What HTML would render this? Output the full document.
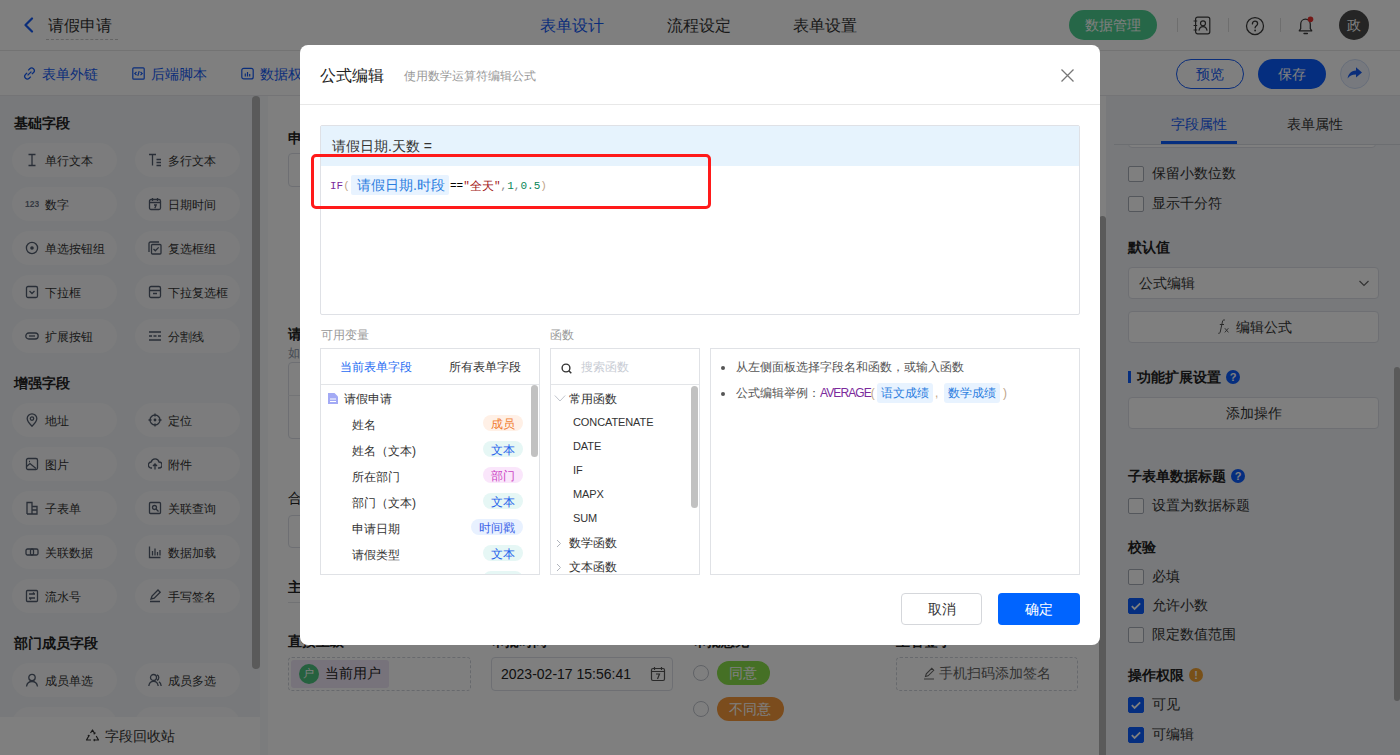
<!DOCTYPE html>
<html><head><meta charset="utf-8">
<style>
*{box-sizing:border-box;margin:0;padding:0}
html,body{width:1400px;height:755px;overflow:hidden;background:#fff}
body{position:relative;font-family:"Liberation Sans",sans-serif;color:#333;font-size:14px}
.a{position:absolute}
.t{position:absolute;white-space:nowrap;line-height:1}
/* top bar */
#top{left:0;top:0;width:1400px;height:51px;background:#fff;border-bottom:1px solid #e6e6e6}
#tool{left:0;top:51px;width:1400px;height:45px;background:#fff}
#left{left:0;top:96px;width:260px;height:659px;background:#f0f2f6}
#strip{left:260px;top:96px;width:8px;height:659px;background:#f7f8fa}
#canvas{left:268px;top:96px;width:838px;height:659px;background:#fff}
#right{left:1106px;top:96px;width:294px;height:659px;background:#f0f2f6}
.chip{position:absolute;width:105px;height:34px;border-radius:17px;background:#f8f9fa}
.chip .ic{position:absolute;left:16px;top:10px;width:14px;height:14px}
.chip .t{left:33px;top:11px;font-size:12px;color:#333}
.sec{font-size:14px;font-weight:bold;color:#222}
#mask{left:0;top:0;width:1400px;height:755px;background:rgba(0,0,0,.5)}
#modal{left:300px;top:45px;width:800px;height:600px;background:#fff;border-radius:8px}
.cb{position:absolute;width:16px;height:16px;border:1px solid #a9aeb8;border-radius:2px;background:#fff}
.cb.on{background:#0a5cff;border-color:#0a5cff}
</style></head><body>

<div id="top" class="a"></div>
<div id="tool" class="a"></div>
<div id="left" class="a"></div>
<div class="a" style="left:0;top:95px;width:1400px;height:1px;background:#e8e9ec"></div>
<div id="strip" class="a"></div>
<div id="canvas" class="a"></div>
<div id="right" class="a"></div>
<div class="a" id="topc">
  <svg class="a" style="left:22px;top:17px" width="13" height="16" viewBox="0 0 13 16"><path d="M10 1.5 L3.5 8 L10 14.5" fill="none" stroke="#155bf5" stroke-width="2.2" stroke-linecap="round" stroke-linejoin="round"/></svg>
  <div class="t" style="left:48px;top:18px;font-size:16px;color:#333">请假申请</div>
  <div class="a" style="left:46px;top:39px;width:72px;border-top:1px dashed #c8c8c8"></div>
  <div class="t" style="left:540px;top:18px;font-size:16px;color:#155bf5">表单设计</div>
  <div class="t" style="left:667px;top:18px;font-size:16px;color:#333">流程设定</div>
  <div class="t" style="left:793px;top:18px;font-size:16px;color:#333">表单设置</div>
  <div class="a" style="left:1069px;top:10px;width:88px;height:30px;border-radius:15px;background:#4ccf90"></div>
  <div class="t" style="left:1085px;top:18px;font-size:14px;color:#fff">数据管理</div>
  <div class="a" style="left:1177px;top:18px;width:1px;height:14px;background:#ddd"></div>
  <div class="a" style="left:1228px;top:18px;width:1px;height:14px;background:#ddd"></div>
  <div class="a" style="left:1280px;top:18px;width:1px;height:14px;background:#ddd"></div>
  <svg class="a" style="left:1192px;top:16px" width="20" height="19" viewBox="0 0 20 19"><rect x="3.6" y="1.2" width="14.2" height="16.6" rx="2" fill="none" stroke="#3a3a3a" stroke-width="1.2"/><path d="M1.6 5h3.6M1.6 9.5h3.6M1.6 14h3.6" stroke="#3a3a3a" stroke-width="1.2"/><circle cx="11" cy="7.3" r="2.5" fill="none" stroke="#3a3a3a" stroke-width="1.2"/><path d="M6.9 14.6c0.6-2.7 2.2-3.9 4.1-3.9s3.5 1.2 4.1 3.9" fill="none" stroke="#3a3a3a" stroke-width="1.2"/></svg>
  <svg class="a" style="left:1245px;top:16px" width="20" height="20" viewBox="0 0 20 20"><circle cx="10" cy="10" r="8.5" fill="none" stroke="#3a3a3a" stroke-width="1.25"/><path d="M7.4 7.9c0-1.6 1.1-2.7 2.6-2.7s2.6 1 2.6 2.5c0 1.9-2.5 2-2.5 4.1" fill="none" stroke="#3a3a3a" stroke-width="1.3" stroke-linecap="round"/><circle cx="10.1" cy="14.5" r="0.9" fill="#3a3a3a"/></svg>
  <svg class="a" style="left:1296px;top:15px" width="20" height="21" viewBox="0 0 20 21"><path d="M3.2 15.8h12.6l-1.5-2.1V9.3c0-3-2-5.1-4.8-5.1S4.7 6.3 4.7 9.3v4.4z" fill="none" stroke="#3a3a3a" stroke-width="1.25" stroke-linejoin="round"/><path d="M8 18.5h3.4" stroke="#3a3a3a" stroke-width="1.3" stroke-linecap="round"/><circle cx="14.5" cy="4.2" r="2.8" fill="#e8322f"/></svg>
  <div class="a" style="left:1339px;top:10px;width:30px;height:30px;border-radius:15px;background:#4a4a4a"></div>
  <div class="t" style="left:1347px;top:18px;font-size:14px;color:#fff">政</div>

  <svg class="a" style="left:23px;top:67px" width="13" height="13" viewBox="0 0 13 13"><g fill="none" stroke="#155bf5" stroke-width="1.3"><path d="M5.2 3.4l1.6-1.6a2.6 2.6 0 0 1 3.7 3.7L8.9 7.1"/><path d="M7.8 9.6l-1.6 1.6a2.6 2.6 0 0 1-3.7-3.7l1.6-1.6"/><path d="M4.6 8.4l3.8-3.8"/></g></svg>
  <div class="t" style="left:42px;top:67px;font-size:14px;color:#155bf5">表单外链</div>
  <svg class="a" style="left:132px;top:67px" width="13" height="13" viewBox="0 0 13 13"><g fill="none" stroke="#155bf5" stroke-width="1.2"><rect x="0.8" y="0.8" width="11.4" height="11.4" rx="1"/><path d="M4.5 4.8L2.8 6.5l1.7 1.7M8.5 4.8l1.7 1.7-1.7 1.7M7.2 4.2L5.8 8.8"/></g></svg>
  <div class="t" style="left:151px;top:67px;font-size:14px;color:#155bf5">后端脚本</div>
  <svg class="a" style="left:241px;top:67px" width="13" height="13" viewBox="0 0 13 13"><g fill="none" stroke="#155bf5" stroke-width="1.2"><rect x="0.8" y="1.3" width="11.4" height="10.6" rx="2"/><path d="M4.3 6.5v3M6.5 5v4.5M8.7 7v2.5"/></g></svg>
  <div class="t" style="left:260px;top:67px;font-size:14px;color:#155bf5">数据权限</div>
  <div class="a" style="left:1176px;top:59px;width:68px;height:30px;border-radius:15px;border:1px solid #155bf5;background:#fff"></div>
  <div class="t" style="left:1196px;top:67px;font-size:14px;color:#155bf5">预览</div>
  <div class="a" style="left:1258px;top:59px;width:68px;height:30px;border-radius:15px;background:#0a5cff"></div>
  <div class="t" style="left:1278px;top:67px;font-size:14px;color:#fff">保存</div>
  <div class="a" style="left:1340px;top:59px;width:30px;height:30px;border-radius:15px;border:1px solid #cfdcf5;background:#eef3fc"></div>
  <svg class="a" style="left:1346px;top:64px" width="18" height="18" viewBox="0 0 18 18"><path d="M10 3.2l6 5.2-6 5.2v-3.1c-4 0-6.6 1.1-8.4 4 0.6-4.6 3.2-7.5 8.4-8.1z" fill="#155bf5"/></svg>
</div>
<div class="a" id="leftc">
<div class="t sec" style="left:14px;top:116px">基础字段</div>
<div class="chip" style="left:12px;top:143px"></div><svg class="a" style="left:25px;top:153px" width="14" height="14" viewBox="0 0 14 14"><path d="M3.5 1.5h7M3.5 12.5h7M7 1.5v11" stroke="#525c6e" stroke-width="1.3" fill="none"/></svg><div class="t" style="left:45px;top:155px;font-size:12px;color:#333">单行文本</div>
<div class="chip" style="left:135px;top:143px"></div><svg class="a" style="left:148px;top:153px" width="14" height="14" viewBox="0 0 14 14"><path d="M1 1.5h7M4.5 1.5v11M8.5 6.5h4.5M8.5 9.5h4.5M8.5 12.5h4.5" stroke="#525c6e" stroke-width="1.3" fill="none"/></svg><div class="t" style="left:168px;top:155px;font-size:12px;color:#333">多行文本</div>
<div class="chip" style="left:12px;top:187px"></div><svg class="a" style="left:25px;top:197px" width="14" height="14" viewBox="0 0 14 14"><text x="0" y="9.5" font-size="8.5" font-weight="bold" fill="#6b7385" font-family="Liberation Sans">123</text></svg><div class="t" style="left:45px;top:199px;font-size:12px;color:#333">数字</div>
<div class="chip" style="left:135px;top:187px"></div><svg class="a" style="left:148px;top:197px" width="14" height="14" viewBox="0 0 14 14"><rect x="1.5" y="2.5" width="11" height="10" rx="1.5" stroke="#525c6e" stroke-width="1.3" fill="none"/><path d="M1.5 5.5h11M4.5 1v3M9.5 1v3M6 8h2.2l-1.4 3.2" stroke="#525c6e" stroke-width="1.3" fill="none"/></svg><div class="t" style="left:168px;top:199px;font-size:12px;color:#333">日期时间</div>
<div class="chip" style="left:12px;top:231px"></div><svg class="a" style="left:25px;top:241px" width="14" height="14" viewBox="0 0 14 14"><circle cx="7" cy="7" r="5.6" stroke="#525c6e" stroke-width="1.3" fill="none"/><circle cx="7" cy="7" r="1.8" fill="#4e5969"/></svg><div class="t" style="left:45px;top:243px;font-size:12px;color:#333">单选按钮组</div>
<div class="chip" style="left:135px;top:231px"></div><svg class="a" style="left:148px;top:241px" width="14" height="14" viewBox="0 0 14 14"><path d="M1 11V2.5A1.5 1.5 0 0 1 2.5 1H11" stroke="#525c6e" stroke-width="1.3" fill="none"/><rect x="3.5" y="3.5" width="9.5" height="9.5" rx="1" stroke="#525c6e" stroke-width="1.3" fill="none"/><path d="M5.5 8l1.8 1.8 3.4-3.4" stroke="#525c6e" stroke-width="1.3" fill="none"/></svg><div class="t" style="left:168px;top:243px;font-size:12px;color:#333">复选框组</div>
<div class="chip" style="left:12px;top:275px"></div><svg class="a" style="left:25px;top:285px" width="14" height="14" viewBox="0 0 14 14"><rect x="1.5" y="1.5" width="11" height="11" rx="1.5" stroke="#525c6e" stroke-width="1.3" fill="none"/><path d="M4.5 6l2.5 2.5 2.5-2.5" stroke="#525c6e" stroke-width="1.3" fill="none"/></svg><div class="t" style="left:45px;top:287px;font-size:12px;color:#333">下拉框</div>
<div class="chip" style="left:135px;top:275px"></div><svg class="a" style="left:148px;top:285px" width="14" height="14" viewBox="0 0 14 14"><rect x="1.5" y="1.5" width="11" height="11" rx="1.5" stroke="#525c6e" stroke-width="1.3" fill="none"/><path d="M1.5 5.5h11M5 8.5h4" stroke="#525c6e" stroke-width="1.3" fill="none"/></svg><div class="t" style="left:168px;top:287px;font-size:12px;color:#333">下拉复选框</div>
<div class="chip" style="left:12px;top:319px"></div><svg class="a" style="left:25px;top:329px" width="14" height="14" viewBox="0 0 14 14"><rect x="0.8" y="4" width="12.4" height="6" rx="3" stroke="#525c6e" stroke-width="1.3" fill="none"/><path d="M4 7h6" stroke="#525c6e" stroke-width="1.3" fill="none"/></svg><div class="t" style="left:45px;top:331px;font-size:12px;color:#333">扩展按钮</div>
<div class="chip" style="left:135px;top:319px"></div><svg class="a" style="left:148px;top:329px" width="14" height="14" viewBox="0 0 14 14"><path d="M1 3h12M1 11h12M1 7h3M5.5 7h3M10 7h3" stroke="#525c6e" stroke-width="1.3" fill="none"/></svg><div class="t" style="left:168px;top:331px;font-size:12px;color:#333">分割线</div>
<div class="t sec" style="left:14px;top:376px">增强字段</div>
<div class="chip" style="left:12px;top:403px"></div><svg class="a" style="left:25px;top:413px" width="14" height="14" viewBox="0 0 14 14"><path d="M7 13.2s-4.8-4.4-4.8-7.6a4.8 4.8 0 0 1 9.6 0c0 3.2-4.8 7.6-4.8 7.6z" stroke="#525c6e" stroke-width="1.3" fill="none"/><circle cx="7" cy="5.6" r="1.7" stroke="#525c6e" stroke-width="1.3" fill="none"/></svg><div class="t" style="left:45px;top:415px;font-size:12px;color:#333">地址</div>
<div class="chip" style="left:135px;top:403px"></div><svg class="a" style="left:148px;top:413px" width="14" height="14" viewBox="0 0 14 14"><circle cx="7" cy="7" r="5" stroke="#525c6e" stroke-width="1.3" fill="none"/><circle cx="7" cy="7" r="1.4" fill="#4e5969"/><path d="M7 0.5v3M7 10.5v3M0.5 7h3M10.5 7h3" stroke="#525c6e" stroke-width="1.3" fill="none"/></svg><div class="t" style="left:168px;top:415px;font-size:12px;color:#333">定位</div>
<div class="chip" style="left:12px;top:447px"></div><svg class="a" style="left:25px;top:457px" width="14" height="14" viewBox="0 0 14 14"><rect x="1.5" y="1.5" width="11" height="11" rx="1.5" stroke="#525c6e" stroke-width="1.3" fill="none"/><path d="M1.5 9.5l3.5-3 6 5M4 4.5h1" stroke="#525c6e" stroke-width="1.3" fill="none"/></svg><div class="t" style="left:45px;top:459px;font-size:12px;color:#333">图片</div>
<div class="chip" style="left:135px;top:447px"></div><svg class="a" style="left:148px;top:457px" width="14" height="14" viewBox="0 0 14 14"><path d="M4 11H3.5a3 3 0 0 1-0.3-6A4 4 0 0 1 11 5a3 3 0 0 1 0 6h-1M7 12.5V7M5 9l2-2 2 2" stroke="#525c6e" stroke-width="1.3" fill="none"/></svg><div class="t" style="left:168px;top:459px;font-size:12px;color:#333">附件</div>
<div class="chip" style="left:12px;top:491px"></div><svg class="a" style="left:25px;top:501px" width="14" height="14" viewBox="0 0 14 14"><path d="M2 13V1.5h5v11.5M7 5.5h5V13H2M7 9h5" stroke="#525c6e" stroke-width="1.3" fill="none"/></svg><div class="t" style="left:45px;top:503px;font-size:12px;color:#333">子表单</div>
<div class="chip" style="left:135px;top:491px"></div><svg class="a" style="left:148px;top:501px" width="14" height="14" viewBox="0 0 14 14"><rect x="1.5" y="1.5" width="11" height="11" rx="1" stroke="#525c6e" stroke-width="1.3" fill="none"/><circle cx="6.5" cy="6.5" r="2" stroke="#525c6e" stroke-width="1.3" fill="none"/><path d="M8 8l2.5 2.5" stroke="#525c6e" stroke-width="1.3" fill="none"/></svg><div class="t" style="left:168px;top:503px;font-size:12px;color:#333">关联查询</div>
<div class="chip" style="left:12px;top:535px"></div><svg class="a" style="left:25px;top:545px" width="14" height="14" viewBox="0 0 14 14"><rect x="1" y="4" width="7.5" height="6" rx="1.5" stroke="#525c6e" stroke-width="1.3" fill="none"/><rect x="5.5" y="4" width="7.5" height="6" rx="1.5" stroke="#525c6e" stroke-width="1.3" fill="none"/></svg><div class="t" style="left:45px;top:547px;font-size:12px;color:#333">关联数据</div>
<div class="chip" style="left:135px;top:535px"></div><svg class="a" style="left:148px;top:545px" width="14" height="14" viewBox="0 0 14 14"><path d="M1.5 1.5v11h11M4.5 6v4.5M7 3.5v7M9.5 7v3.5M12 5v5.5" stroke="#525c6e" stroke-width="1.3" fill="none"/></svg><div class="t" style="left:168px;top:547px;font-size:12px;color:#333">数据加载</div>
<div class="chip" style="left:12px;top:579px"></div><svg class="a" style="left:25px;top:589px" width="14" height="14" viewBox="0 0 14 14"><rect x="1.5" y="1.5" width="11" height="11" rx="1" stroke="#525c6e" stroke-width="1.3" fill="none"/><path d="M4 5h6M4 9h6M8 3.5l1.5 1.5M6 10.5L4.5 9" stroke="#525c6e" stroke-width="1.3" fill="none"/></svg><div class="t" style="left:45px;top:591px;font-size:12px;color:#333">流水号</div>
<div class="chip" style="left:135px;top:579px"></div><svg class="a" style="left:148px;top:589px" width="14" height="14" viewBox="0 0 14 14"><path d="M2 12.5h10M3 10l1-3L10 1l2.2 2.2-6 6z" stroke="#525c6e" stroke-width="1.3" fill="none"/></svg><div class="t" style="left:168px;top:591px;font-size:12px;color:#333">手写签名</div>
<div class="t sec" style="left:14px;top:636px">部门成员字段</div>
<div class="chip" style="left:12px;top:663px"></div><svg class="a" style="left:25px;top:673px" width="14" height="14" viewBox="0 0 14 14"><circle cx="7" cy="4.5" r="3.2" stroke="#525c6e" stroke-width="1.3" fill="none"/><path d="M1.5 13.5c0.5-3.2 2.7-5 5.5-5s5 1.8 5.5 5" stroke="#525c6e" stroke-width="1.3" fill="none"/></svg><div class="t" style="left:45px;top:675px;font-size:12px;color:#333">成员单选</div>
<div class="chip" style="left:135px;top:663px"></div><svg class="a" style="left:148px;top:673px" width="14" height="14" viewBox="0 0 14 14"><circle cx="5.5" cy="4.5" r="3" stroke="#525c6e" stroke-width="1.3" fill="none"/><path d="M0.8 13c0.4-3 2.4-4.6 4.7-4.6s4.3 1.6 4.7 4.6M9 1.8a3 3 0 0 1 0 5.5M11 8.8c1.3 0.8 2 2.3 2.2 4.2" stroke="#525c6e" stroke-width="1.3" fill="none"/></svg><div class="t" style="left:168px;top:675px;font-size:12px;color:#333">成员多选</div>
<div class="chip" style="left:12px;top:707px"></div><div class="chip" style="left:135px;top:707px"></div>
<div class="a" style="left:252px;top:96px;width:8px;height:573px;border-radius:4px;background:#b4b4b4"></div>
<div class="a" style="left:0;top:717px;width:260px;height:38px;background:#fff"></div>
<svg class="a" style="left:85px;top:729px" width="15" height="14" viewBox="0 0 15 14"><g fill="none" stroke="#333" stroke-width="1.2" stroke-linejoin="round"><path d="M5.5 4L7.5 1l2.2 3.6M11.2 7l2.3 4H9.5M6 11H1.5l2.3-4"/><path d="M8.6 4.8l1.2-0.2 0.3-1.2M4.5 7.2L3.8 6.3l-1 0.4M8.8 12.2l0.8-1.2-0.8-1"/></g></svg>
<div class="t" style="left:105px;top:729px;font-size:14px;color:#333">字段回收站</div>
</div>
<div class="a" id="midc">
<div class="t" style="left:288px;top:131px;font-size:14px;color:#222;font-weight:bold">申请人信息</div>
<div class="a" style="left:288px;top:153px;width:182px;height:34px;border:1px solid #dcdfe6;border-radius:4px"></div>
<div class="t" style="left:288px;top:327px;font-size:14px;color:#222;font-weight:bold">请假事由</div>
<div class="t" style="left:288px;top:347px;font-size:12px;color:#8a94a6">如有特殊情况请说明</div>
<div class="a" style="left:288px;top:362px;width:400px;height:77px;border:1px solid #dcdfe6;border-radius:4px"></div>
<div class="a" style="left:288px;top:395px;width:400px;border-top:1px solid #e6e8ec"></div>
<div class="t" style="left:288px;top:491px;font-size:14px;color:#222">合计天数</div>
<div class="a" style="left:288px;top:515px;width:182px;height:33px;border:1px solid #dcdfe6;border-radius:4px"></div>
<div class="t" style="left:288px;top:580px;font-size:14px;color:#222;font-weight:bold">主管审批</div>
<div class="a" style="left:288px;top:602px;width:792px;border-top:1px solid #e3e5e8"></div>
<div class="t" style="left:288px;top:634px;font-size:14px;color:#222;font-weight:bold">直接上级</div>
<div class="t" style="left:491px;top:634px;font-size:14px;color:#222;font-weight:bold">审批时间</div>
<div class="t" style="left:693px;top:634px;font-size:14px;color:#222;font-weight:bold">审批意见</div>
<div class="t" style="left:896px;top:634px;font-size:14px;color:#222;font-weight:bold">主管签字</div>
<div class="a" style="left:288px;top:657px;width:183px;height:34px;border:1px dashed #cfd3da;border-radius:4px"></div>
<div class="a" style="left:291px;top:660px;width:98px;height:28px;border-radius:3px;background:#eee6f7"></div>
<div class="a" style="left:299px;top:664px;width:20px;height:20px;border-radius:10px;background:#4cc27e"></div>
<div class="t" style="left:303px;top:668px;font-size:11px;color:#fff">户</div>
<div class="t" style="left:325px;top:666px;font-size:14px;color:#222">当前用户</div>
<div class="a" style="left:491px;top:657px;width:182px;height:34px;border:1px solid #dcdfe6;border-radius:4px"></div>
<div class="t" style="left:501px;top:667px;font-size:14px;color:#222">2023-02-17 15:56:41</div>
<svg class="a" style="left:650px;top:666px" width="16" height="16" viewBox="0 0 16 16"><g fill="none" stroke="#555" stroke-width="1.2"><rect x="1.5" y="2.5" width="13" height="12" rx="1.5"/><path d="M1.5 5.5h13M4.5 1v3M11.5 1v3M6 8h3.5l-2 5"/></g></svg>
<div class="a" style="left:693px;top:665px;width:16px;height:16px;border-radius:8px;border:1px solid #c0c4cc;background:#fff"></div>
<div class="a" style="left:717px;top:661px;width:53px;height:24px;border-radius:12px;background:#8ae04a"></div>
<div class="t" style="left:729px;top:666px;font-size:14px;color:#fff">同意</div>
<div class="a" style="left:693px;top:701px;width:16px;height:16px;border-radius:8px;border:1px solid #c0c4cc;background:#fff"></div>
<div class="a" style="left:717px;top:697px;width:67px;height:24px;border-radius:12px;background:#f7993a"></div>
<div class="t" style="left:729px;top:702px;font-size:14px;color:#fff">不同意</div>
<div class="a" style="left:896px;top:657px;width:182px;height:34px;border:1px dashed #cfd3da;border-radius:4px"></div>
<svg class="a" style="left:923px;top:667px" width="13" height="13" viewBox="0 0 13 13"><g fill="none" stroke="#666" stroke-width="1.1"><path d="M1 12h10M2.5 9.5l0.8-2.6L8.8 1.4l1.9 1.9-5.6 5.5z"/></g></svg>
<div class="t" style="left:939px;top:666px;font-size:14px;color:#666">手机扫码添加签名</div>
<div class="a" style="left:1099px;top:216px;width:7px;height:560px;border-radius:3.5px;background:#b4b4b4"></div>
<div class="a" style="left:1128px;top:110px;width:248px;height:38px;border:1px solid #dcdfe6;border-radius:4px;background:#fff"></div>
<div class="a" style="left:1106px;top:96px;width:294px;height:49px;background:#f0f2f6"></div>
<div class="a" style="left:1114px;top:144px;width:286px;border-top:1px solid #d9dce2"></div>
<div class="t" style="left:1171px;top:117px;font-size:14px;color:#155bf5">字段属性</div>
<div class="t" style="left:1287px;top:117px;font-size:14px;color:#333">表单属性</div>
<div class="a" style="left:1161px;top:141px;width:76px;height:3px;background:#0a5cff"></div>
<div class="cb" style="left:1128px;top:166px"></div><div class="t" style="left:1152px;top:166px;font-size:14px;color:#333">保留小数位数</div>
<div class="cb" style="left:1128px;top:196px"></div><div class="t" style="left:1152px;top:196px;font-size:14px;color:#333">显示千分符</div>
<div class="t sec" style="left:1128px;top:240px">默认值</div>
<div class="a" style="left:1128px;top:267px;width:251px;height:32px;border:1px solid #dcdfe6;border-radius:4px;background:#fff"></div>
<div class="t" style="left:1139px;top:276px;font-size:14px;color:#333">公式编辑</div>
<svg class="a" style="left:1358px;top:278px" width="12" height="10" viewBox="0 0 12 10"><path d="M1.5 3l4.5 4.5 4.5-4.5" fill="none" stroke="#666" stroke-width="1.2"/></svg>
<div class="a" style="left:1128px;top:311px;width:251px;height:32px;border:1px solid #dcdfe6;border-radius:4px;background:#fff"></div>
<svg class="a" style="left:1217px;top:318px" width="13" height="16" viewBox="0 0 13 16"><path d="M8 2.2c-0.8-0.5-2-0.3-2.4 0.8L3.2 14.2c-0.3 1-1.2 1.4-2 1" fill="none" stroke="#555" stroke-width="1"/><path d="M2.8 6.5h4.2" stroke="#555" stroke-width="1"/><path d="M7.8 10.2l3.6 4.2M11.4 10.2l-3.6 4.2" stroke="#555" stroke-width="0.9"/></svg>
<div class="t" style="left:1236px;top:320px;font-size:14px;color:#333">编辑公式</div>
<div class="a" style="left:1128px;top:371px;width:3px;height:12px;background:#0a5cff"></div>
<div class="t sec" style="left:1137px;top:370px">功能扩展设置</div>
<div class="a" style="left:1226px;top:370px;width:14px;height:14px;border-radius:7px;background:#0a5cff"></div><div class="t" style="left:1226px;top:372px;width:14px;text-align:center;font-size:11px;font-weight:bold;color:#fff">?</div>
<div class="a" style="left:1128px;top:397px;width:251px;height:32px;border:1px solid #dcdfe6;border-radius:4px;background:#fff"></div>
<div class="t" style="left:1226px;top:406px;font-size:14px;color:#333">添加操作</div>
<div class="t sec" style="left:1128px;top:469px">子表单数据标题</div>
<div class="a" style="left:1231px;top:469px;width:14px;height:14px;border-radius:7px;background:#0a5cff"></div><div class="t" style="left:1231px;top:471px;width:14px;text-align:center;font-size:11px;font-weight:bold;color:#fff">?</div>
<div class="cb" style="left:1128px;top:498px"></div><div class="t" style="left:1152px;top:498px;font-size:14px;color:#333">设置为数据标题</div>
<div class="t sec" style="left:1128px;top:540px">校验</div>
<div class="cb" style="left:1128px;top:569px"></div><div class="t" style="left:1152px;top:569px;font-size:14px;color:#333">必填</div>
<div class="cb on" style="left:1128px;top:598px"></div><svg class="a" style="left:1128px;top:598px" width="16" height="16" viewBox="0 0 16 16"><path d="M3.8 8.2l2.8 2.8 5.6-5.6" fill="none" stroke="#fff" stroke-width="1.8"/></svg><div class="t" style="left:1152px;top:598px;font-size:14px;color:#333">允许小数</div>
<div class="cb" style="left:1128px;top:627px"></div><div class="t" style="left:1152px;top:627px;font-size:14px;color:#333">限定数值范围</div>
<div class="t sec" style="left:1128px;top:668px">操作权限</div>
<div class="a" style="left:1189px;top:668px;width:14px;height:14px;border-radius:7px;background:#f0a030"></div><div class="t" style="left:1189px;top:670px;width:14px;text-align:center;font-size:11px;font-weight:bold;color:#fff">!</div>
<div class="cb on" style="left:1128px;top:697px"></div><svg class="a" style="left:1128px;top:697px" width="16" height="16" viewBox="0 0 16 16"><path d="M3.8 8.2l2.8 2.8 5.6-5.6" fill="none" stroke="#fff" stroke-width="1.8"/></svg><div class="t" style="left:1152px;top:697px;font-size:14px;color:#333">可见</div>
<div class="cb on" style="left:1128px;top:727px"></div><svg class="a" style="left:1128px;top:727px" width="16" height="16" viewBox="0 0 16 16"><path d="M3.8 8.2l2.8 2.8 5.6-5.6" fill="none" stroke="#fff" stroke-width="1.8"/></svg><div class="t" style="left:1152px;top:727px;font-size:14px;color:#333">可编辑</div>
<div class="a" style="left:1394px;top:367px;width:6px;height:334px;border-radius:3px;background:#b4b4b4"></div>
</div>
<div id="mask" class="a"></div>
<div id="modal" class="a"></div>

<div class="a" id="modc">
<div class="t" style="left:320px;top:68px;font-size:16px;color:#222">公式编辑</div>
<div class="t" style="left:404px;top:70px;font-size:12px;color:#999">使用数学运算符编辑公式</div>
<svg class="a" style="left:1060px;top:68px" width="15" height="15" viewBox="0 0 15 15"><path d="M1.5 1.5l12 12M13.5 1.5l-12 12" stroke="#777" stroke-width="1.3"/></svg>
<div class="a" style="left:300px;top:104px;width:800px;border-top:1px solid #e8e8e8"></div>
<div class="a" style="left:320px;top:125px;width:760px;height:190px;border:1px solid #dfe1e6;border-radius:2px"></div>
<div class="a" style="left:321px;top:126px;width:758px;height:40px;background:#e6f3fd"></div>
<div class="t" style="left:332px;top:139px;font-size:14px;color:#333">请假日期.天数 =</div>
<div class="t" style="left:330px;top:181px;font-family:'Liberation Mono',monospace;font-size:11px;color:#7b2a9c">IF<span style="color:#c0a68a">(</span></div>
<div class="a" style="left:351px;top:175px;width:98px;height:20px;border-radius:2px;background:#e8f3ff"></div>
<div class="t" style="left:357px;top:178px;font-size:14px;color:#2b7de0">请假日期.时段</div>
<div class="t" style="left:450px;top:181px;font-family:'Liberation Mono',monospace;font-size:11px;color:#000">==<span style="color:#a31515">"</span></div><div class="t" style="left:470px;top:180px;font-size:12px;color:#a31515">全天</div><div class="t" style="left:494px;top:181px;font-family:'Liberation Mono',monospace;font-size:11px"><span style="color:#a31515">"</span><span style="color:#888">,</span><span style="color:#098658">1</span><span style="color:#888">,</span><span style="color:#098658">0.5</span><span style="color:#c0a68a">)</span></div>
<div class="t" style="left:321px;top:329px;font-size:12px;color:#999">可用变量</div>
<div class="t" style="left:550px;top:329px;font-size:12px;color:#999">函数</div>
<div class="a" style="left:320px;top:348px;width:220px;height:227px;border:1px solid #e0e2e6;overflow:hidden" id="vp"></div>
<div class="a" style="left:321px;top:384px;width:218px;border-top:1px solid #e3e5e8"></div>
<div class="t" style="left:340px;top:361px;font-size:12px;color:#1f6cf2">当前表单字段</div>
<div class="t" style="left:449px;top:361px;font-size:12px;color:#333">所有表单字段</div>
<svg class="a" style="left:328px;top:393px" width="10" height="11" viewBox="0 0 10 11"><path d="M0 0h6.5L10 3.5V11H0z" fill="#a3aaf5"/><path d="M2 6h6M2 8.5h6" stroke="#fff" stroke-width="1"/></svg>
<div class="t" style="left:344px;top:393px;font-size:12px;color:#333">请假申请</div>
<div class="a" style="left:0;top:0;width:1400px;height:574px;overflow:hidden"><div class="t" style="left:352px;top:419px;font-size:12px;color:#333">姓名</div><div class="a" style="left:483px;top:415px;width:40px;height:16px;border-radius:8px;background:#fff0e6"></div><div class="t" style="left:491px;top:418px;font-size:12px;color:#f07c30">成员</div><div class="t" style="left:352px;top:445px;font-size:12px;color:#333">姓名（文本)</div><div class="a" style="left:483px;top:441px;width:40px;height:16px;border-radius:8px;background:#e6f7f5"></div><div class="t" style="left:491px;top:444px;font-size:12px;color:#2563eb">文本</div><div class="t" style="left:352px;top:471px;font-size:12px;color:#333">所在部门</div><div class="a" style="left:483px;top:467px;width:40px;height:16px;border-radius:8px;background:#fae6fb"></div><div class="t" style="left:491px;top:470px;font-size:12px;color:#cc45c4">部门</div><div class="t" style="left:352px;top:497px;font-size:12px;color:#333">部门（文本)</div><div class="a" style="left:483px;top:493px;width:40px;height:16px;border-radius:8px;background:#e6f7f5"></div><div class="t" style="left:491px;top:496px;font-size:12px;color:#2563eb">文本</div><div class="t" style="left:352px;top:523px;font-size:12px;color:#333">申请日期</div><div class="a" style="left:471px;top:519px;width:52px;height:16px;border-radius:8px;background:#e8f1ff"></div><div class="t" style="left:479px;top:522px;font-size:12px;color:#3b63e8">时间戳</div><div class="t" style="left:352px;top:549px;font-size:12px;color:#333">请假类型</div><div class="a" style="left:483px;top:545px;width:40px;height:16px;border-radius:8px;background:#e6f7f5"></div><div class="t" style="left:491px;top:548px;font-size:12px;color:#2563eb">文本</div><div class="a" style="left:483px;top:571px;width:40px;height:16px;border-radius:8px;background:#e6f7f5"></div></div>
<div class="a" style="left:531px;top:385px;width:7px;height:72px;border-radius:3.5px;background:#c1c1c1"></div>
<div class="a" style="left:550px;top:348px;width:150px;height:227px;border:1px solid #e0e2e6"></div>
<div class="a" style="left:551px;top:384px;width:148px;border-top:1px solid #e3e5e8"></div>
<svg class="a" style="left:561px;top:363px" width="12" height="11" viewBox="0 0 12 11"><circle cx="5" cy="5" r="3.9" fill="none" stroke="#333" stroke-width="1.4"/><path d="M7.8 7.8l2.5 2.5" stroke="#333" stroke-width="1.5"/></svg>
<div class="t" style="left:581px;top:361px;font-size:12px;color:#c8ccd4">搜索函数</div>
<svg class="a" style="left:554px;top:394px" width="12" height="9" viewBox="0 0 12 9"><path d="M0.8 1.5l5.2 5.5 5.2-5.5" fill="none" stroke="#c0c4cc" stroke-width="1"/></svg>
<div class="t" style="left:569px;top:393px;font-size:12px;color:#333">常用函数</div>
<div class="a" style="left:0;top:0;width:1400px;height:574px;overflow:hidden"><div class="t" style="left:573px;top:417px;font-size:11px;letter-spacing:-0.1px;color:#333">CONCATENATE</div><div class="t" style="left:573px;top:441px;font-size:11px;letter-spacing:-0.1px;color:#333">DATE</div><div class="t" style="left:573px;top:465px;font-size:11px;letter-spacing:-0.1px;color:#333">IF</div><div class="t" style="left:573px;top:489px;font-size:11px;letter-spacing:-0.1px;color:#333">MAPX</div><div class="t" style="left:573px;top:513px;font-size:11px;letter-spacing:-0.1px;color:#333">SUM</div><svg class="a" style="left:556px;top:539px" width="6" height="9" viewBox="0 0 6 9"><path d="M1 1l3.5 3.5L1 8" fill="none" stroke="#b0b4bc" stroke-width="1"/></svg><div class="t" style="left:569px;top:537px;font-size:12px;color:#333">数学函数</div><svg class="a" style="left:556px;top:563px" width="6" height="9" viewBox="0 0 6 9"><path d="M1 1l3.5 3.5L1 8" fill="none" stroke="#b0b4bc" stroke-width="1"/></svg><div class="t" style="left:569px;top:561px;font-size:12px;color:#333">文本函数</div></div>
<div class="a" style="left:691px;top:386px;width:7px;height:122px;border-radius:3.5px;background:#c1c1c1"></div>
<div class="a" style="left:710px;top:348px;width:370px;height:227px;border:1px solid #e0e2e6"></div>
<div class="a" style="left:721px;top:366px;width:4px;height:4px;border-radius:2px;background:#555"></div>
<div class="a" style="left:721px;top:392px;width:4px;height:4px;border-radius:2px;background:#555"></div>
<div class="t" style="left:736px;top:361px;font-size:12px;color:#555">从左侧面板选择字段名和函数，或输入函数</div>
<div class="t" style="left:736px;top:387px;font-size:12px;color:#555">公式编辑举例：</div>
<div class="t" style="left:820px;top:387px;font-size:12px;letter-spacing:-0.9px;color:#7b2a9c">AVERAGE<span style="color:#c0a68a">(</span></div>
<div class="a" style="left:877px;top:383px;width:56px;height:20px;border-radius:3px;background:#e8f3ff"></div>
<div class="t" style="left:881px;top:387px;font-size:12px;color:#2b7de0">语文成绩</div>
<div class="t" style="left:935px;top:387px;font-size:12px;color:#c0a68a">,</div>
<div class="a" style="left:944px;top:383px;width:56px;height:20px;border-radius:3px;background:#e8f3ff"></div>
<div class="t" style="left:948px;top:387px;font-size:12px;color:#2b7de0">数学成绩</div>
<div class="t" style="left:1003px;top:387px;font-size:12px;color:#c0a68a">)</div>
<div class="a" style="left:901px;top:593px;width:81px;height:32px;border:1px solid #d5d7db;border-radius:4px"></div>
<div class="t" style="left:901px;top:602px;width:81px;text-align:center;font-size:14px;color:#333">取消</div>
<div class="a" style="left:998px;top:593px;width:82px;height:32px;border-radius:4px;background:#0064ff"></div>
<div class="t" style="left:998px;top:602px;width:82px;text-align:center;font-size:14px;color:#fff">确定</div>
<div class="a" style="left:311px;top:154px;width:400px;height:55px;border:3px solid #ff1a1a;border-radius:5px"></div>
</div>
</body></html>
